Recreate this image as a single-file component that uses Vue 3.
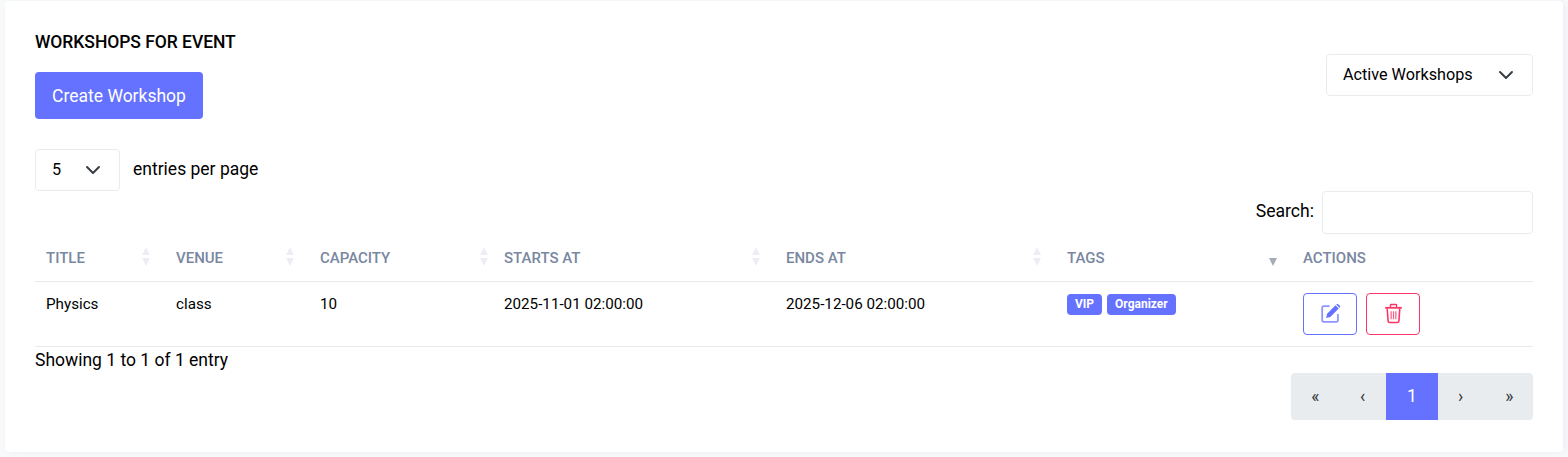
<template>
  <div class="page">
    <div class="card">
      <div class="top-row">
        <div>
          <h6 class="card-title">WORKSHOPS FOR EVENT</h6>
          <button class="btn-create">Create Workshop</button>
        </div>
        <div class="select select-filter">
          <span>Active Workshops</span>
          <svg class="chevron" viewBox="0 0 16 16"><path d="M2 5l6 6 6-6" /></svg>
        </div>
      </div>

      <div class="per-page">
        <div class="select select-size">
          <span>5</span>
          <svg class="chevron" viewBox="0 0 16 16"><path d="M2 5l6 6 6-6" /></svg>
        </div>
        <span>entries per page</span>
      </div>

      <div class="search-row">
        <label for="search">Search:</label>
        <input id="search" class="search-input" type="text" />
      </div>

      <table class="table">
        <thead>
          <tr>
            <th v-for="col in columns" :key="col.label" :class="col.cls">
              {{ col.label }}
              <span v-if="col.sortable" class="sorter" :class="{ desc: col.desc }">
                <i class="up"></i>
                <i class="down"></i>
              </span>
            </th>
          </tr>
        </thead>
        <tbody>
          <tr>
            <td>Physics</td>
            <td>class</td>
            <td>10</td>
            <td>2025-11-01 02:00:00</td>
            <td>2025-12-06 02:00:00</td>
            <td class="tags-cell">
              <span class="badge">VIP</span>
              <span class="badge">Organizer</span>
            </td>
            <td class="actions-cell">
              <button class="icon-btn edit">
                <svg viewBox="0 0 24 24" width="21" height="21">
                  <path d="M11 3.500H4.500a2 2 0 0 0-2 2v14a2 2 0 0 0 2 2h14a2 2 0 0 0 2-2v-7" fill="none" stroke="currentColor" stroke-width="2" opacity="0.75" />
                  <path d="M7 17l1.100-4.800L17.700 2.600l3.700 3.700-9.600 9.600z" fill="currentColor" />
                  <path d="M19 1.300a1.300 1.300 0 0 1 1.800 0l1.900 1.900a1.300 1.300 0 0 1 0 1.800l-.5.500-3.700-3.700z" fill="currentColor" />
                </svg>
              </button>
              <button class="icon-btn delete">
                <svg viewBox="0 0 24 24" width="21" height="21" fill="none" stroke="currentColor">
                  <path d="M2.500 5.500h19" stroke-width="2" />
                  <path d="M8.500 4.500v-2a.8.8 0 0 1 .8-.8h5.400a.8.8 0 0 1 .8.8v2" stroke-width="1.600" />
                  <path d="M4.800 6l1 14.500a1.800 1.800 0 0 0 1.800 1.700h8.800a1.800 1.800 0 0 0 1.800-1.700l1-14.500" stroke-width="1.800" />
                  <path d="M9.300 9.500v9M12 9.500v9M14.700 9.500v9" stroke-width="1.400" opacity="0.8" />
                </svg>
              </button>
            </td>
          </tr>
        </tbody>
      </table>

      <div class="info">Showing 1 to 1 of 1 entry</div>

      <div class="pager-row">
        <ul class="pagination">
          <li>«</li>
          <li>‹</li>
          <li class="active">1</li>
          <li>›</li>
          <li>»</li>
        </ul>
      </div>
    </div>
  </div>
</template>

<script setup>
const columns = [
  { label: 'TITLE', cls: 'c-title', sortable: true },
  { label: 'VENUE', cls: 'c-venue', sortable: true },
  { label: 'CAPACITY', cls: 'c-capacity', sortable: true },
  { label: 'STARTS AT', cls: 'c-starts', sortable: true },
  { label: 'ENDS AT', cls: 'c-ends', sortable: true },
  { label: 'TAGS', cls: 'c-tags', sortable: true, desc: true },
  { label: 'ACTIONS', cls: 'c-actions', sortable: false },
]
</script>

<style>
html,
body {
  margin: 0;
  background: #f9fafb;
}
</style>

<style scoped>
.page {
  height: 457px;
  padding: 1px 5px 0;
  box-sizing: border-box;
  font-family: Roboto, 'Liberation Sans', sans-serif;
  color: #000;
  overflow: hidden;
}

.card {
  height: 451px;
  box-sizing: border-box;
  padding: 32px 30px 0;
  background: #fff;
  border-radius: 4px;
  box-shadow: 3px 0 10px 0 rgba(183, 192, 206, 0.2);
}

.top-row {
  display: flex;
  justify-content: space-between;
  align-items: flex-start;
}

.card-title {
  margin: 0 0 21px;
  font-size: 17.5px;
  line-height: 18px;
  font-weight: 500;
  letter-spacing: -0.05px;
}

.btn-create {
  display: block;
  width: 168px;
  height: 47px;
  padding: 0;
  border: 0;
  border-radius: 4px;
  background: #6571ff;
  color: #fff;
  font-family: inherit;
  font-size: 17.5px;
}

.select {
  display: flex;
  align-items: center;
  justify-content: space-between;
  box-sizing: border-box;
  height: 42px;
  padding: 0 18px 2px 16px;
  border: 1px solid #e9ecef;
  border-radius: 4px;
  font-size: 16.2px;
  color: #000;
}

.select-filter {
  width: 207px;
  margin-top: 21px;
}

.select-size {
  width: 85px;
}

.chevron {
  width: 16px;
  height: 16px;
  margin-top: 2px;
  fill: none;
  stroke: #343a40;
  stroke-width: 1.900;
  stroke-linecap: round;
  stroke-linejoin: round;
}

.per-page {
  display: flex;
  align-items: center;
  gap: 13px;
  margin-top: 30px;
  font-size: 17.5px;
}

.per-page > span {
  margin-top: -2px;
}

.search-row {
  display: flex;
  justify-content: flex-end;
  align-items: center;
  gap: 8px;
  font-size: 17.6px;
}

.search-row label {
  margin-top: -4px;
}

.search-input {
  width: 211px;
  height: 43px;
  box-sizing: border-box;
  border: 1px solid #e9ecef;
  border-radius: 4px;
  outline: none;
  background: #fff;
}

.table {
  width: 1498px;
  table-layout: fixed;
  border-collapse: collapse;
}

th {
  position: relative;
  height: 47px;
  box-sizing: border-box;
  padding: 1px 11px 0;
  border-bottom: 1px solid #e9ecef;
  color: #7987a1;
  font-size: 15px;
  font-weight: 500;
  text-align: left;
}

td {
  height: 65px;
  box-sizing: border-box;
  padding: 12px 11px 0;
  border-bottom: 1px solid #e9ecef;
  font-size: 15.2px;
  line-height: 20px;
  vertical-align: top;
}

.c-title { width: 130px; }
.c-venue { width: 144px; }
.c-capacity { width: 184px; }
.c-starts { width: 282px; }
.c-ends { width: 281px; }
.c-tags { width: 236px; }
.c-actions { width: 241px; }

.sorter {
  position: absolute;
  top: 13px;
  right: 15px;
  display: flex;
  flex-direction: column;
  gap: 3px;
}

.c-capacity .sorter {
  right: 5px;
}

.sorter i {
  display: block;
  width: 0;
  height: 0;
  border-left: 4.500px solid transparent;
  border-right: 4.500px solid transparent;
}

.sorter .up {
  border-bottom: 8px solid #eceef3;
}

.sorter .down {
  border-top: 8px solid #eceef3;
}

.sorter.desc .up {
  border-bottom-color: transparent;
}

.sorter.desc .down {
  border-top-color: #a6abb9;
}

.tags-cell {
  padding-top: 12px;
}

.badge {
  display: inline-block;
  height: 21px;
  margin-right: 5px;
  padding: 0 8px;
  border-radius: 4px;
  background: #6571ff;
  color: #fff;
  font-size: 12px;
  font-weight: 700;
  line-height: 21px;
  vertical-align: top;
}

.actions-cell {
  padding-top: 11px;
}

.icon-btn {
  display: inline-flex;
  align-items: center;
  justify-content: center;
  width: 54px;
  height: 42px;
  margin-right: 9px;
  padding: 0;
  border: 1px solid currentColor;
  border-radius: 4px;
  background: #fff;
  vertical-align: top;
}

.icon-btn.edit {
  color: #6571ff;
}

.icon-btn.delete {
  color: #ff3366;
}

.info {
  margin-top: 3px;
  font-size: 17.5px;
  line-height: 20px;
}

.pager-row {
  display: flex;
  justify-content: flex-end;
  margin-top: 3px;
}

.pagination {
  display: flex;
  margin: 0;
  padding: 0;
  list-style: none;
  border-radius: 4px;
  overflow: hidden;
  background: #e9ecef;
}

.pagination li {
  width: 47.500px;
  height: 47px;
  font-size: 17.5px;
  line-height: 47px;
  text-align: center;
  color: #343a40;
}

.pagination li:nth-child(1),
.pagination li:nth-child(2) {
  padding-left: 1px;
  width: 46.500px;
}

.pagination li:nth-child(4) {
  padding-right: 2px;
  width: 45.500px;
}

.pagination li.active {
  width: 52px;
  background: #6571ff;
  color: #fff;
  font-size: 17.600px;
}
</style>
